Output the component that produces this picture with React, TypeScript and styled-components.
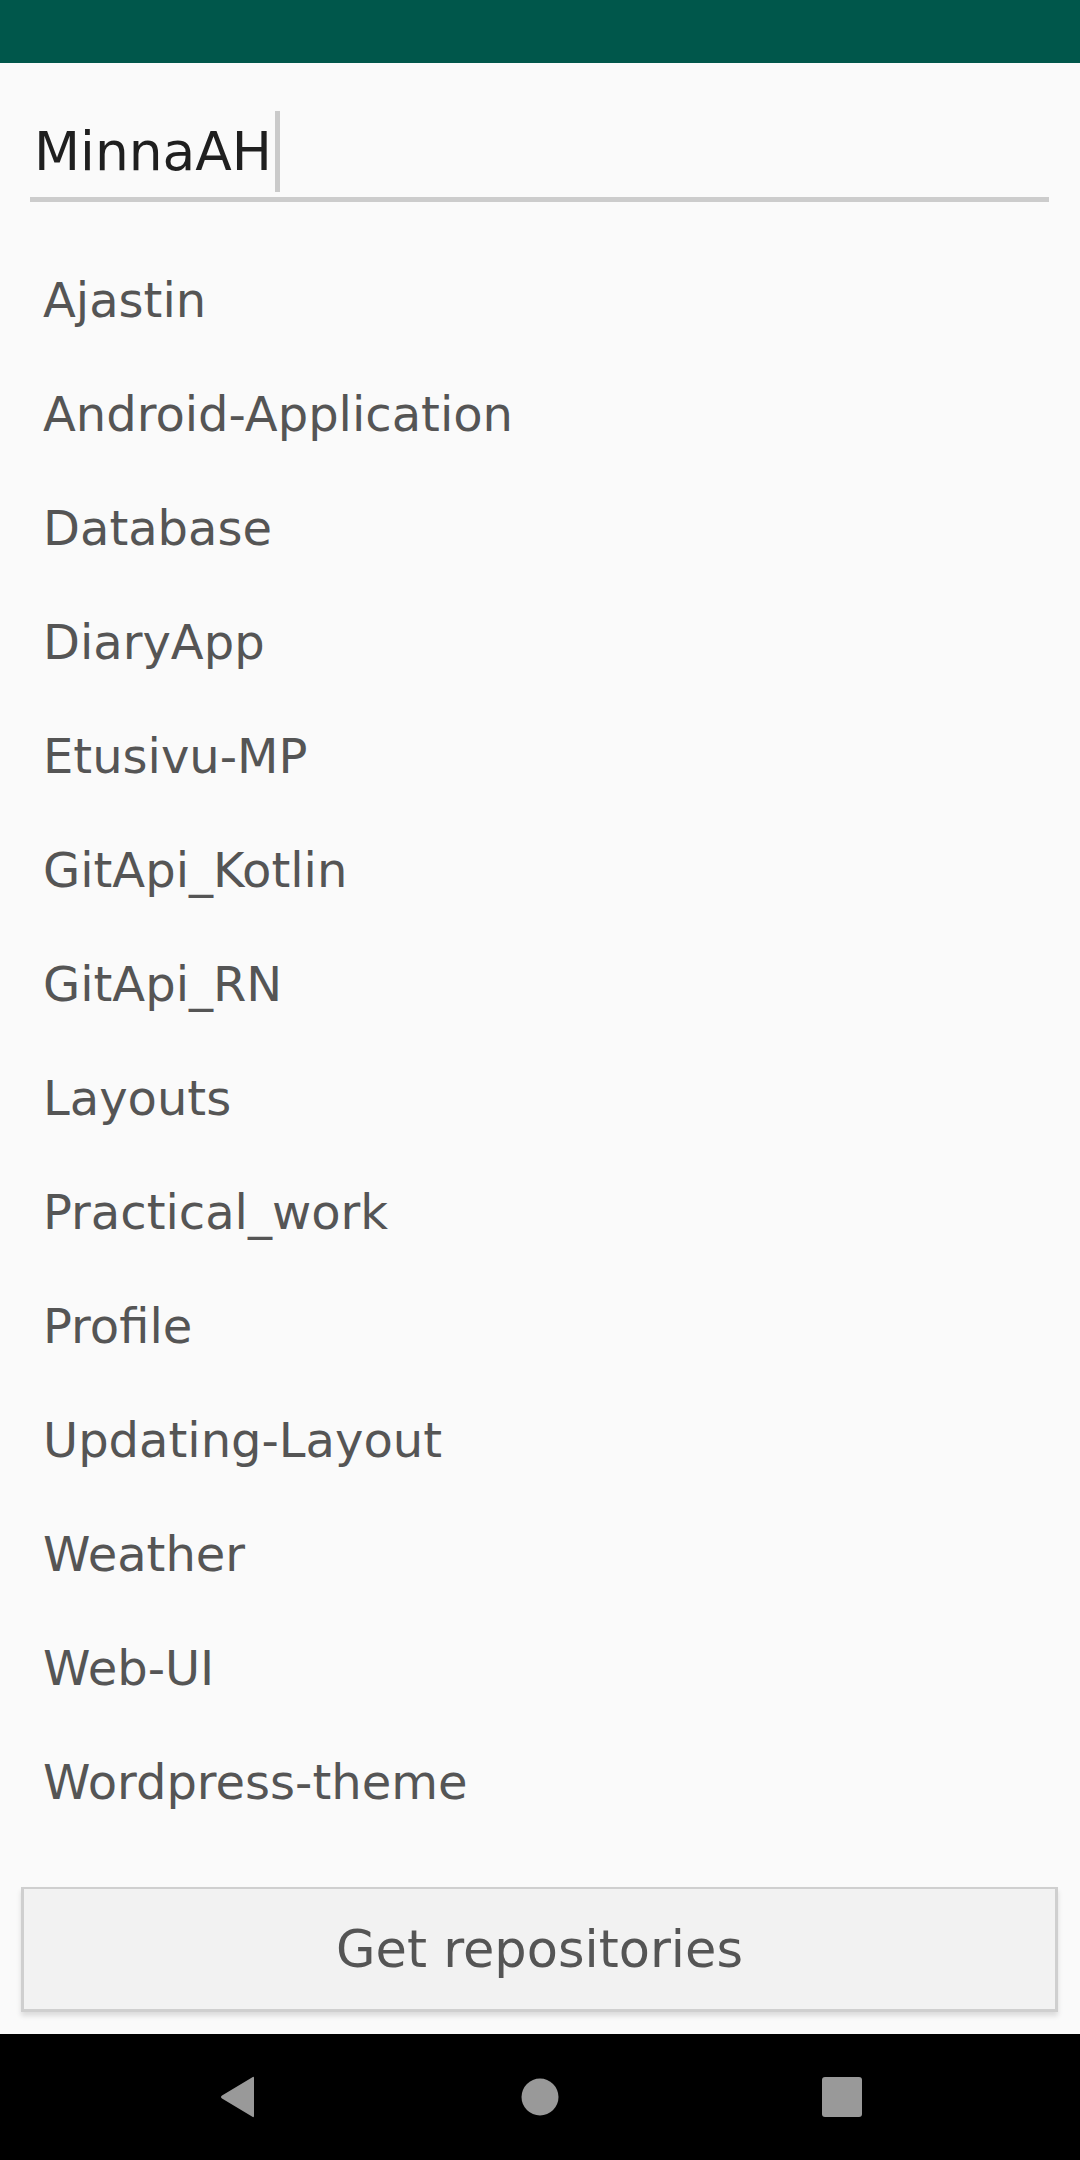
import React from "react";
import styled, { createGlobalStyle } from "styled-components";

const GlobalStyle = createGlobalStyle`
  html, body {
    margin: 0;
    padding: 0;
    background: #fafafa;
  }
  * { box-sizing: border-box; }
`;

const FONT = `"DejaVu Sans", "Liberation Sans", sans-serif`;

const Screen = styled.div`
  width: 1080px;
  height: 2160px;
  display: flex;
  flex-direction: column;
  background: #fafafa;
  font-family: ${FONT};
  overflow: hidden;
`;

const StatusBar = styled.div`
  height: 63px;
  flex-shrink: 0;
  background: #00574b;
`;

const Main = styled.main`
  flex: 1;
  display: flex;
  flex-direction: column;
`;

const TextField = styled.div`
  margin: 48px 31px 0 30px;
  padding-left: 4px;
  border-bottom: 5px solid #cccccc;
  padding-bottom: 5px;
  display: flex;
  align-items: center;
`;

const FieldText = styled.span`
  font-size: 53.4px;
  line-height: 81px;
  color: #1f1f1f;
  white-space: nowrap;
`;

const Caret = styled.span`
  display: block;
  width: 5px;
  height: 81px;
  margin-left: 3px;
  background: #cacaca;
`;

const RepoList = styled.ul`
  list-style: none;
  margin: 41px 0 0 0;
  padding: 0;
`;

const RepoItem = styled.li`
  height: 114px;
  padding-left: 43px;
  font-size: 48px;
  line-height: 114px;
  color: #555555;
  white-space: nowrap;
`;

const ActionButton = styled.button`
  margin: auto 22px 22px 21px;
  height: 125px;
  border: 3px solid #cfcfcf;
  border-top-width: 2px;
  background: #f2f2f2;
  box-shadow: 0 4px 5px rgba(0, 0, 0, 0.12);
  font-family: ${FONT};
  font-size: 51px;
  color: #555555;
  display: flex;
  align-items: center;
  justify-content: center;
  padding: 0;
`;

const NavBar = styled.nav`
  height: 126px;
  flex-shrink: 0;
  background: #000000;
  display: flex;
  align-items: center;
  justify-content: center;
  gap: 242px;
`;

const NavSlot = styled.div`
  width: 60px;
  height: 60px;
  display: flex;
  align-items: center;
  justify-content: center;
`;

const repos = [
  "Ajastin",
  "Android-Application",
  "Database",
  "DiaryApp",
  "Etusivu-MP",
  "GitApi_Kotlin",
  "GitApi_RN",
  "Layouts",
  "Practical_work",
  "Profile",
  "Updating-Layout",
  "Weather",
  "Web-UI",
  "Wordpress-theme",
];

export default function App() {
  return (
    <>
      <GlobalStyle />
      <Screen>
        <StatusBar />
        <Main>
          <TextField>
            <FieldText>MinnaAH</FieldText>
            <Caret />
          </TextField>
          <RepoList>
            {repos.map((r) => (
              <RepoItem key={r}>{r}</RepoItem>
            ))}
          </RepoList>
          <ActionButton>Get repositories</ActionButton>
        </Main>
        <NavBar>
          <NavSlot>
            <svg width="40" height="44" viewBox="0 0 40 44">
              <path
                d="M36 3 L36 41 Q36 43 34 41.5 L4 23.5 Q2 22 4 20.5 L34 2.5 Q36 1 36 3 Z"
                fill="#999999"
              />
            </svg>
          </NavSlot>
          <NavSlot>
            <svg width="38" height="38" viewBox="0 0 38 38">
              <circle cx="19" cy="19" r="18.5" fill="#999999" />
            </svg>
          </NavSlot>
          <NavSlot>
            <svg width="40" height="40" viewBox="0 0 40 40">
              <rect x="0" y="0" width="40" height="40" rx="3" fill="#999999" />
            </svg>
          </NavSlot>
        </NavBar>
      </Screen>
    </>
  );
}
